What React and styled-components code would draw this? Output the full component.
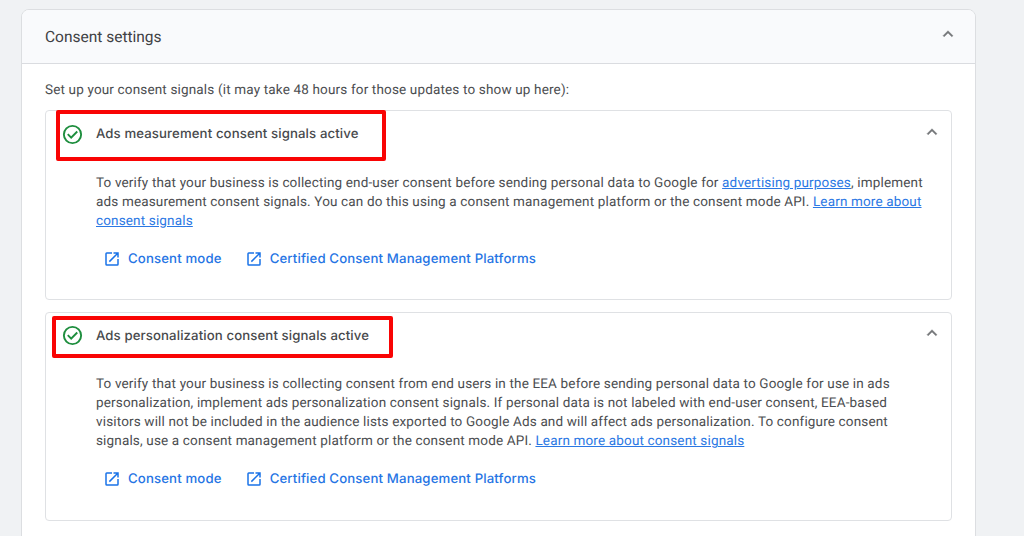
import React from 'react';
import styled, { createGlobalStyle } from 'styled-components';

const panels = [
  {
    title: "Ads measurement consent signals active",
    height: 190,
    headerHeight: 46,
    mark: { top: -1, left: 10, width: 330, height: 51 },
    lines: [
      [
        { text: "To verify that your business is collecting end-user consent before sending personal data to Google for " },
        { text: "advertising purposes", link: true },
        { text: ", implement" }
      ],
      [
        { text: "ads measurement consent signals. You can do this using a consent management platform or the consent mode API. " },
        { text: "Learn more about", link: true }
      ],
      [{ text: "consent signals", link: true }]
    ]
  },
  {
    title: "Ads personalization consent signals active",
    height: 209,
    headerHeight: 45,
    mark: { top: 3, left: 6, width: 341, height: 42 },
    lines: [
      [{ text: "To verify that your business is collecting consent from end users in the EEA before sending personal data to Google for use in ads" }],
      [{ text: "personalization, implement ads personalization consent signals. If personal data is not labeled with end-user consent, EEA-based" }],
      [{ text: "visitors will not be included in the audience lists exported to Google Ads and will affect ads personalization. To configure consent" }],
      [
        { text: "signals, use a consent management platform or the consent mode API. " },
        { text: "Learn more about consent signals", link: true }
      ]
    ]
  }
];

const CheckIcon = () => (
  <svg width="23" height="23" viewBox="0 0 24 24" fill="#1e8e3e">
    <path d="m10.6 16.6 7.05-7.05-1.4-1.4-5.65 5.65-2.85-2.85-1.4 1.4zM12 22a10 10 0 1 1 0-20 10 10 0 0 1 0 20zm0-2a8 8 0 1 0 0-16 8 8 0 0 0 0 16z" />
  </svg>
);

const ChevronUp = () => (
  <svg width="20" height="20" viewBox="0 0 24 24" fill="#747679" stroke="#747679" strokeWidth="0.5">
    <path d="m12 8-6 6 1.41 1.41L12 10.83l4.59 4.58L18 14z" />
  </svg>
);

const OpenIcon = () => (
  <svg width="18" height="18" viewBox="0 0 24 24" fill="#1a73e8">
    <path d="M19 19H5V5h7V3H5a2 2 0 0 0-2 2v14a2 2 0 0 0 2 2h14a2 2 0 0 0 2-2v-7h-2zM14 3v2h3.59l-9.83 9.83 1.41 1.41L19 6.41V10h2V3z" />
  </svg>
);

const App = () => {
  return (
    <Page>
      <GlobalStyle />
      <Card>
        <CardHeader>
          <CardTitle>Consent settings</CardTitle>
          <ChevronUp />
        </CardHeader>
        <CardBody>
          <Intro>Set up your consent signals (it may take 48 hours for those updates to show up here):</Intro>
          <PanelList>
            {panels.map((panel) => (
              <Panel key={panel.title} $height={panel.height}>
                <Mark $box={panel.mark} />
                <PanelHeader $height={panel.headerHeight}>
                  <CheckIcon />
                  <PanelTitle>{panel.title}</PanelTitle>
                  <ChevronUp />
                </PanelHeader>
                <Description>
                  {panel.lines.map((line, index) => (
                    <Line key={index}>
                      {line.map((part) =>
                        part.link ? <Link key={part.text} href="#">{part.text}</Link> : part.text
                      )}
                    </Line>
                  ))}
                </Description>
                <Actions>
                  <Action href="#"><OpenIcon />Consent mode</Action>
                  <Action href="#"><OpenIcon />Certified Consent Management Platforms</Action>
                </Actions>
              </Panel>
            ))}
          </PanelList>
        </CardBody>
      </Card>
    </Page>
  );
};

export default App;

// Styled Components

const GlobalStyle = createGlobalStyle`
  * { box-sizing: border-box; }
  body { margin: 0; overflow: hidden; }
`;

const Page = styled.div`
  height: 536px;
  padding: 9px 48px 0 21px;
  overflow: hidden;
  background: #f0f2f4;
  color: #4b4d50;
  font-family: Roboto, "Liberation Sans", sans-serif;
  text-rendering: geometricPrecision;
`;

const Card = styled.div`
  height: 560px;
  background: #ffffff;
  border: 1px solid #dcdee1;
  border-radius: 8px;
  overflow: hidden;
`;

const CardHeader = styled.div`
  display: flex;
  align-items: center;
  justify-content: space-between;
  height: 54px;
  padding: 0 17px 0 23px;
  background: #f9fafc;
  border-bottom: 1px solid #dadce0;

  svg {
    margin-bottom: 5px;
  }
`;

const CardTitle = styled.h1`
  margin: 0;
  font-size: 15.5px;
  font-weight: 400;
  letter-spacing: 0;
  color: #3f4144;
`;

const CardBody = styled.div`
  padding: 16px 23px 0;
`;

const Intro = styled.p`
  margin: 0;
  font-size: 13.5px;
  line-height: 20px;
  letter-spacing: 0.16px;
  white-space: nowrap;
`;

const PanelList = styled.div`
  display: flex;
  flex-direction: column;
  gap: 12px;
  padding-top: 10px;
`;

const Panel = styled.section`
  position: relative;
  height: ${(props) => props.$height}px;
  border: 1px solid #dfe1e4;
  border-radius: 4px;
`;

/* Red highlight drawn over the panel heading */
const Mark = styled.div`
  position: absolute;
  top: ${(props) => props.$box.top}px;
  left: ${(props) => props.$box.left}px;
  width: ${(props) => props.$box.width}px;
  height: ${(props) => props.$box.height}px;
  border: 4px solid #f90404;
  border-radius: 2px;
`;

const PanelHeader = styled.div`
  display: flex;
  align-items: center;
  height: ${(props) => props.$height}px;
  padding: 0 9px 0 15px;

  svg:last-child {
    margin: 0 0 5px auto;
  }
`;

const PanelTitle = styled.h2`
  margin: 0.6px 0 0 12px;
  font-family: Inter, Roboto, sans-serif;
  font-size: 13.2px;
  line-height: 16px;
  font-weight: 500;
  letter-spacing: 0.11px;
  color: #47494c;
`;

const Description = styled.div`
  padding: 16.6px 0 0 50px;
`;

const Line = styled.div`
  font-size: 13.5px;
  line-height: 19.25px;
  letter-spacing: 0.155px;
  white-space: pre;
`;

const Link = styled.a`
  color: #2b78e4;
  text-decoration: underline;
`;

const Actions = styled.div`
  display: flex;
  gap: 23px;
  padding: 17.7px 0 0 57px;
`;

const Action = styled.a`
  display: flex;
  align-items: center;
  gap: 7px;
  height: 20px;
  font-family: Inter, Roboto, sans-serif;
  font-size: 13.2px;
  line-height: 16px;
  font-weight: 500;
  letter-spacing: 0.14px;
  white-space: nowrap;
  color: #2574e4;
  text-decoration: none;

  svg {
    margin-bottom: 1px;
  }
`;
